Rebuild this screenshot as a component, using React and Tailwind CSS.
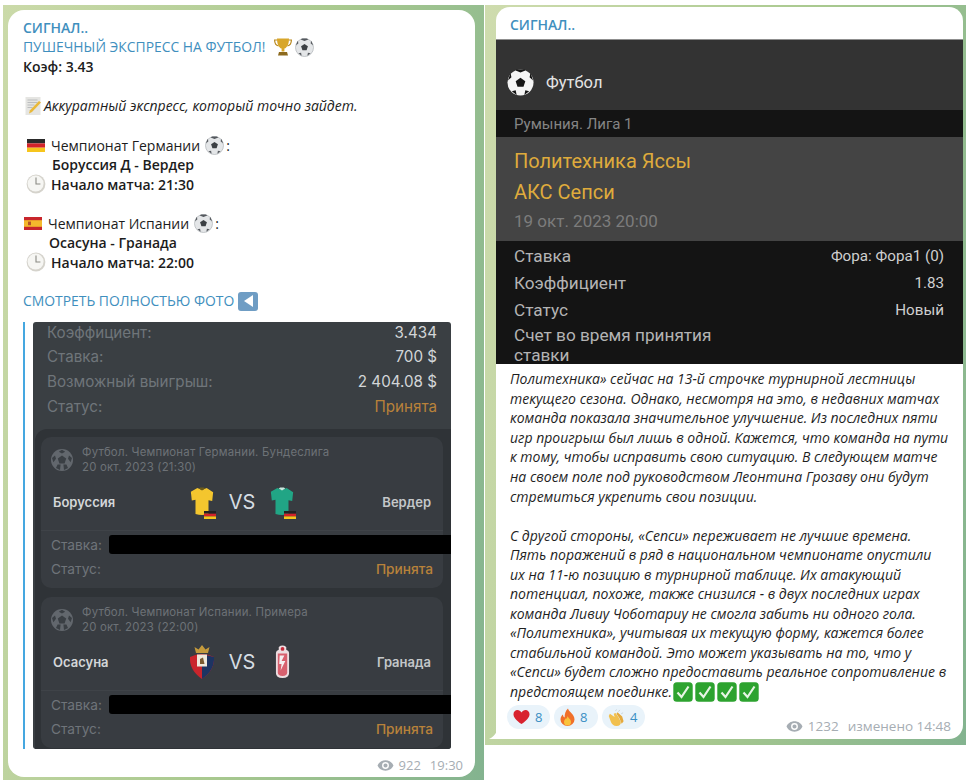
import React from "react";

const OPEN = "font-['Open_Sans',sans-serif]";

const Ball = ({ className = "w-[19px] h-[19px]" }) => (
  <svg viewBox="0 0 20 20" className={`shrink-0 ${className}`}>
    <circle cx="10" cy="10" r="9.5" fill="#e4e6e8" />
    <circle cx="10" cy="10" r="9.5" fill="none" stroke="#b4b8bc" strokeWidth="0.8" />
    <path d="M10 6.2l3.6 2.6-1.4 4.2H7.8L6.4 8.8z" fill="#3c4044" />
    <path d="M6 1.6L10 3.2l4-1.6-1.5-1H7.5zM1 8l2.6-2.4L2.8 3zM19 8l-2.6-2.4L17.2 3zM3.6 16l2.8-.6L7 18.8zM16.4 16l-2.8-.6L13 18.8z" fill="#55595e" />
  </svg>
);

const Clock = () => (
  <svg viewBox="0 0 20 20" className="w-[20px] h-[20px] shrink-0">
    <circle cx="10" cy="10" r="9.4" fill="#d5d3cc" />
    <circle cx="9.6" cy="9.6" r="8" fill="#f6f6f3" />
    <path d="M10 3.6V10h4.4" fill="none" stroke="#8a8a84" strokeWidth="1.1" />
  </svg>
);

const FlagDe = () => (
  <svg viewBox="0 0 18 13" className="w-[18px] h-[13px] shrink-0">
    <rect width="18" height="4.4" fill="#2a2a2a" />
    <rect y="4.4" width="18" height="4.3" fill="#d3232a" />
    <rect y="8.7" width="18" height="4.3" fill="#f6c51d" />
  </svg>
);

const FlagEs = () => (
  <svg viewBox="0 0 18 13" className="w-[18px] h-[13px] shrink-0">
    <rect width="18" height="13" fill="#c8262c" />
    <rect y="3.2" width="18" height="6.6" fill="#f4b92c" />
    <rect x="4" y="4.6" width="3" height="3.6" fill="#b5532a" />
  </svg>
);

const Trophy = () => (
  <svg viewBox="0 0 20 20" className="w-[20px] h-[20px] shrink-0">
    <path d="M4 3H1.6c0 3.6 1.4 5.4 4 6M16 3h2.4c0 3.6-1.4 5.4-4 6" fill="none" stroke="#b98a22" strokeWidth="1.2" />
    <path d="M4 1.4h12c0 5.4-1.6 9-4.6 10.2v3H8.600v-3C5.600 10.400 4 6.800 4 1.400z" fill="#d8a62a" />
    <path d="M6 15h8l1 3.600H5z" fill="#8c6a1e" />
  </svg>
);

const Memo = () => (
  <svg viewBox="0 0 18 20" className="w-[18px] h-[20px] shrink-0">
    <rect x="0.500" y="1" width="15" height="18" fill="#e5e5e2" />
    <path d="M2.500 4h10M2.500 6.500h10M2.500 9h7M2.500 11.500h5" stroke="#a9acb0" strokeWidth="0.7" />
    <path d="M16 6.500L7 16l-3 1.500 1-3.200 9-9.300z" fill="#e9b93a" />
  </svg>
);

const Eye = ({ className }) => (
  <svg viewBox="0 0 24 16" className={`shrink-0 ${className}`} fill="#a6adb3">
    <path fillRule="evenodd" d="M12 .5C6.600.5 2.200 3.600.4 8c1.800 4.400 6.200 7.500 11.600 7.500S21.800 12.400 23.600 8C21.800 3.600 17.400.5 12 .5zm0 12.500a5 5 0 110-10 5 5 0 010 10zm0-8a3 3 0 100 6 3 3 0 000-6z" />
  </svg>
);

const SportIcon = () => (
  <svg viewBox="0 0 22 22" className="w-[22px] h-[22px] shrink-0">
    <circle cx="11" cy="11" r="11" fill="#62676d" />
    <path d="M11 6.500l4.200 3-1.600 5H8.400l-1.600-5z" fill="#3a3f44" />
    <path d="M11 .8l3.200 2-3.200 1.800-3.200-1.800zM1 9l3-2.600 1 3.400-2.600 3.400zM21 9l-3-2.600-1 3.400 2.600 3.400zM5 19l1.600-3.400h3l-.6 5.400zM17 19l-1.600-3.400h-3l.6 5.400z" fill="#3a3f44" />
  </svg>
);

const Jersey = ({ color, shade }) => (
  <div className="relative w-[26px] h-[33px]">
    <svg viewBox="0 0 28 32" className="w-[26px] h-[32px]">
      <path d="M9 1l5 2 5-2 7 4.500-1 9.500-4-.8V29q-7 2-14 0V13.700l-4 .8-1-9.500z" fill={color} />
      <path d="M10.500 1.500L14 3.500l3.500-2-1.500-1h-4z" fill={shade} />
    </svg>
    <svg viewBox="0 0 12 8" className="absolute -right-[1px] bottom-0 w-[12px] h-[8px]">
      <rect width="12" height="2.700" fill="#222" />
      <rect y="2.700" width="12" height="2.700" fill="#d3232a" />
      <rect y="5.400" width="12" height="2.600" fill="#f6c51d" />
    </svg>
  </div>
);

const Osasuna = () => (
  <svg viewBox="0 0 26 36" className="w-[26px] h-[36px]">
    <path d="M7 9L5.500 3l4 2.500L13 1l3.500 4.500 4-2.500L19 9z" fill="#c49a3c" />
    <path d="M1 13q12-6 24 0 1 13-12 22Q0 26 1 13z" fill="#c9252c" />
    <path d="M13 11q6 0 12 2 1 13-12 22z" fill="#1d3462" />
    <rect x="8" y="10.500" width="10" height="12" fill="#efe9dc" />
    <path d="M11 20v-5l3-1.500 1.500 6.500z" fill="#7a5a30" />
  </svg>
);

const Granada = () => (
  <svg viewBox="0 0 16 36" className="w-[15px] h-[36px]">
    <path d="M4 2q4-3 8 0v3q3 1 3 3v22q0 5-7 5t-7-5V8q0-2 3-3z" fill="#ecdde0" />
    <path d="M3 9h10v20q0 4-5 4t-5-4z" fill="#d8606e" />
    <path d="M5 11h5l-3 6h4L6 27l1-7H4.500z" fill="#f5eef0" />
    <circle cx="8" cy="4" r="2" fill="#c42a3a" />
  </svg>
);

const Heart = () => (
  <svg viewBox="0 0 18 16" className="w-[17px] h-[16px] shrink-0">
    <path d="M9 15.500C3 11 .5 8 .5 5 .5 2.500 2.500.7 4.700.7 6.500.7 8 1.700 9 3.300 10 1.700 11.500.7 13.300.7 15.500.7 17.500 2.500 17.500 5c0 3-2.500 6-8.500 10.500z" fill="#d8232f" />
  </svg>
);

const Fire = () => (
  <svg viewBox="0 0 15 18" className="w-[15px] h-[18px] shrink-0">
    <path d="M8 .5c.8 3.500 6.500 5.500 6.500 11A7 6.500 0 11.500 11.500c0-2.500 1.300-4 2.500-5 0 1.500.6 2.500 1.600 3C4.600 6 5.500 2.500 8 .5z" fill="#f0702a" />
    <path d="M7.500 8c.5 2 3.500 3 3.500 6a3.500 3.500 0 11-7 0c0-2 1.500-3 1.800-3.800.5.800 1 1 1.700-2.200z" fill="#f9c33c" />
  </svg>
);

const Clap = () => (
  <svg viewBox="0 0 18 18" className="w-[17px] h-[17px] shrink-0">
    <path d="M2 5l5 3.500L6 5l2-.8 3 4.300 2.500 5c.5 2.500-1 4.500-4.500 4.500-3 0-5-2-6-4.500L.8 7.500z" fill="#f1c04f" />
    <path d="M8 2l1-1.500M11 3l1.500-2M14 5l2-1" stroke="#c9d3da" strokeWidth="1" />
    <path d="M10 3.500l5 4.500 1.500 5-2 2.500-2.500-6-3-4.500z" fill="#e5a93c" />
  </svg>
);

const Check = () => (
  <svg viewBox="0 0 20 20" className="w-[20px] h-[20px] shrink-0">
    <rect x="0.300" y="0.300" width="19.400" height="19.400" rx="3.500" fill="#2da32f" />
    <path d="M4.500 10.500l4 4.500L15.500 4.500" fill="none" stroke="#e7f5e4" strokeWidth="2.200" />
  </svg>
);

const Line = ({ className = "", children }) => (
  <div className={`flex items-center h-[19.55px] whitespace-nowrap ${className}`}>{children}</div>
);

const BetCard = ({ league, date, home, away, homeIcon, awayIcon }) => (
  <div className="bg-[#383c41] rounded-[10px] h-[151px] font-['Inter',sans-serif]">
    <div className="flex items-center gap-[9px] pl-[10px] h-[46px]">
      <SportIcon />
      <div className="text-[11.400px] leading-[15px] text-[#6d7277] tracking-[0.2px] whitespace-nowrap">
        <div>{league}</div>
        <div>{date}</div>
      </div>
    </div>
    <div className="grid grid-cols-[1fr_auto_1fr] items-center h-[38px] px-[12px]">
      <div className="text-[13px] font-semibold text-[#d4d7d9]">{home}</div>
      <div className="flex items-center justify-center gap-[13px]">
        <div className="w-[28px] flex justify-center">{homeIcon}</div>
        <span className="text-[20px] text-[#d6dde3]">VS</span>
        <div className="w-[28px] flex justify-center">{awayIcon}</div>
      </div>
      <div className="text-[13px] font-semibold text-[#c4c7c9] text-right">{away}</div>
    </div>
    <div className="border-t border-[#3f4348] mt-[9px] pt-[2px] px-[10px] text-[13.700px] text-[#6f747a]">
      <div className="flex items-center h-[23px] gap-[7px]">
        <span>Ставка:</span>
        <div className="flex-1 h-[19px] bg-black rounded-l-[3px] -mr-[18px]" />
      </div>
      <div className="flex items-center justify-between h-[26px]">
        <span>Статус:</span>
        <span className="text-[#b8823a] font-medium">Принята</span>
      </div>
    </div>
  </div>
);

const TopRow = ({ label, value, valueClass = "text-[#d3d6d8]" }) => (
  <div className="flex items-center justify-between h-[24.700px] text-[15.200px] font-['Inter',sans-serif]">
    <span className="text-[#6f757a]">{label}</span>
    <span className={valueClass}>{value}</span>
  </div>
);

const InfoRow = ({ label, value }) => (
  <div className="flex items-center justify-between h-[27px]">
    <span className="text-[17.200px] text-[#b4b4b4]">{label}</span>
    <span className="text-[15.200px] text-[#cfcfcf]">{value}</span>
  </div>
);

const ARTICLE = [
  "Политехника» сейчас на 13-й строчке турнирной лестницы",
  "текущего сезона. Однако, несмотря на это, в недавних матчах",
  "команда показала значительное улучшение. Из последних пяти",
  "игр проигрыш был лишь в одной. Кажется, что команда на пути",
  "к тому, чтобы исправить свою ситуацию. В следующем матче",
  "на своем поле под руководством Леонтина Грозаву они будут",
  "стремиться укрепить свои позиции.",
  "",
  "С другой стороны, «Сепси» переживает не лучшие времена.",
  "Пять поражений в ряд в национальном чемпионате опустили",
  "их на 11-ю позицию в турнирной таблице. Их атакующий",
  "потенциал, похоже, также снизился - в двух последних играх",
  "команда Ливиу Чоботариу не смогла забить ни одного гола.",
  "«Политехника», учитывая их текущую форму, кажется более",
  "стабильной командой. Это может указывать на то, что у",
  "«Сепси» будет сложно предоставить реальное сопротивление в",
];

const Reaction = ({ icon, count, className }) => (
  <div className={`flex items-center gap-[5px] h-[24px] rounded-full bg-[#e9f3fa] pl-[6px] ${className}`}>
    {icon}
    <span className="text-[13px] text-[#3a8fc4]">{count}</span>
  </div>
);

export default function App() {
  return (
    <div className={`flex gap-[1px] pl-[3px] pt-[5px] w-[978px] h-[782px] bg-white overflow-hidden ${OPEN}`}>
      {/* left post */}
      <div className="w-[481px] h-[775px] pl-[5px] pt-[5px] bg-[linear-gradient(100deg,#cbdaa9_0%,#a9c98f_55%,#83b38f_100%)]">
        <div className="w-[467px] h-[767px] bg-white rounded-[16px] pl-[15px] pt-[8px] text-[14px] text-[#1c1c1c]">
          <Line className="font-semibold text-[#3f8fbe]">СИГНАЛ..</Line>
          <Line className="text-[#3f8fbe] text-[13.900px]">
            ПУШЕЧНЫЙ ЭКСПРЕСС НА ФУТБОЛ!
            <span className="ml-[7px] flex gap-[2px] items-center"><Trophy /><Ball /></span>
          </Line>
          <Line className="font-semibold">Коэф: 3.43</Line>
          <Line />
          <Line className="italic pl-[2px]"><Memo /><span className="ml-[1px]">Аккуратный экспресс, который точно зайдет.</span></Line>
          <Line />
          <Line className="pl-[4px]"><FlagDe /><span className="ml-[6px]">Чемпионат Германии</span><span className="ml-[5px] mr-[2px]"><Ball /></span>:</Line>
          <Line className="pl-[29px] font-semibold">Боруссия Д - Вердер</Line>
          <Line className="pl-[3px] font-semibold"><Clock /><span className="ml-[5px]">Начало матча: 21:30</span></Line>
          <Line />
          <Line className="pl-[1px]"><FlagEs /><span className="ml-[6px]">Чемпионат Испании</span><span className="ml-[5px] mr-[2px]"><Ball /></span>:</Line>
          <Line className="pl-[26px] font-semibold">Осасуна - Гранада</Line>
          <Line className="pl-[3px] font-semibold"><Clock /><span className="ml-[5px]">Начало матча: 22:00</span></Line>
          <Line />
          <Line className="text-[#3f8fbe] text-[13.900px]">
            СМОТРЕТЬ ПОЛНОСТЬЮ ФОТО
            <span className="ml-[4px] w-[20px] h-[19px] rounded-[3px] bg-[#6f9dc4] flex items-center justify-center">
              <span className="w-0 h-0 border-y-[6px] border-y-transparent border-r-[9px] border-r-white" />
            </span>
          </Line>

          <div className="flex mt-[10.500px]">
            <div className="w-[2px] bg-[#45a7e0]" />
            <div className="ml-[8px] w-[418px] h-[427px] bg-[#3a3f43] rounded-[3px] overflow-hidden">
              <div className="px-[14px] -mt-[1px]">
                <TopRow label="Коэффициент:" value="3.434" />
                <TopRow label="Ставка:" value="700 $" />
                <TopRow label="Возможный выигрыш:" value="2 404.08 $" />
                <TopRow label="Статус:" value="Принята" valueClass="text-[#b8823a]" />
              </div>
              <div className="mt-[10px] ml-[2px] h-[320px] bg-[#2f3337] rounded-tl-[12px] pl-[6px] pr-[8px] pt-[8px] flex flex-col gap-[9px]">
                <BetCard
                  league="Футбол. Чемпионат Германии. Бундеслига"
                  date="20 окт. 2023 (21:30)"
                  home="Боруссия"
                  away="Вердер"
                  homeIcon={<Jersey color="#f4c62e" shade="#6a5a1a" />}
                  awayIcon={<Jersey color="#21a585" shade="#c9e8de" />}
                />
                <BetCard
                  league="Футбол. Чемпионат Испании. Примера"
                  date="20 окт. 2023 (22:00)"
                  home="Осасуна"
                  away="Гранада"
                  homeIcon={<Osasuna />}
                  awayIcon={<Granada />}
                />
              </div>
            </div>
          </div>

          <div className="flex items-center justify-end gap-[5px] pr-[12px] mt-[7px] text-[13px] text-[#a6adb3]">
            <Eye className="w-[17px] h-[11px]" />
            <span>922</span>
            <span className="ml-[4px]">19:30</span>
          </div>
        </div>
      </div>

      {/* right post */}
      <div className="w-[481px] h-[740px] pl-[11px] pt-[2px] bg-[linear-gradient(100deg,#cfdcae_0%,#a9c98f_55%,#83b38f_100%)]">
        <div className="relative w-[467px] h-[732px] bg-white rounded-t-[14px] rounded-br-[14px]">
          <svg viewBox="0 0 8 8" className="absolute -left-[7px] bottom-0 w-[8px] h-[8px]">
            <path d="M8 0v8H0q5-2 8-8z" fill="#fff" />
          </svg>
          <div className="h-[32px] flex items-center pl-[14px] pt-[3px] text-[14px] font-semibold text-[#3f8fbe]">СИГНАЛ..</div>
          <div className="font-['Roboto',sans-serif]">
            <div className="h-[71px] bg-[#333333] border-t border-[#8f8f8f] flex items-center pl-[11px] pt-[15px] gap-[12px]">
              <svg viewBox="0 0 28 28" className="w-[27px] h-[27px] shrink-0">
                <circle cx="14" cy="14" r="13.500" fill="#f4f4f4" />
                <path d="M14 9l5 3.600-1.900 5.900h-6.200L9 12.600z" fill="#151515" />
                <path d="M9 1.500l5 2 5-2-1-1H10zM1 12l3.600-3.500-1-4.500zM27 12l-3.600-3.500 1-4.500zM5 23l4-1 1 5zM23 23l-4-1-1 5z" fill="#151515" />
              </svg>
              <span className="text-[16.500px] text-[#e4e4e4] pt-[1px]">Футбол</span>
            </div>
            <div className="h-[27px] bg-[#141414] flex items-center pl-[18px] pt-[1px] text-[15px] text-[#858585]">Румыния. Лига 1</div>
            <div className="h-[104px] bg-[#444444] pl-[18px] pt-[8px]">
              <div className="h-[31px] flex items-center text-[20px] text-[#dfab3c]">Политехника Яссы</div>
              <div className="h-[31px] flex items-center text-[20px] text-[#dfab3c]">АКС Сепси</div>
              <div className="h-[29px] flex items-center text-[17px] text-[#7c7c7c]">19 окт. 2023 20:00</div>
            </div>
            <div className="h-[123px] bg-[#141414] pl-[18px] pr-[19px] pt-[2px] overflow-hidden">
              <InfoRow label="Ставка" value="Фора: Фора1 (0)" />
              <InfoRow label="Коэффициент" value="1.83" />
              <InfoRow label="Статус" value="Новый" />
              <div className="text-[17.200px] leading-[20px] text-[#b4b4b4] mt-[1px]">Счет во время принятия<br />ставки</div>
            </div>
          </div>
          <div className="pl-[14px] pt-[5px] italic text-[14px] text-[#1f1f1f]">
            {ARTICLE.map((line, i) => (
              <Line key={i}>{line}</Line>
            ))}
            <Line>
              предстоящем поединке.
              <span className="flex gap-[2px] ml-[1px]"><Check /><Check /><Check /><Check /></span>
            </Line>
          </div>
          <div className="flex items-start justify-between pl-[11px] pr-[12px] mt-[4px]">
            <div className="flex gap-[4px]">
              <Reaction icon={<Heart />} count="8" className="w-[43px]" />
              <Reaction icon={<Fire />} count="8" className="w-[44px]" />
              <Reaction icon={<Clap />} count="4" className="w-[43px]" />
            </div>
            <div className="flex items-center gap-[5px] mt-[11px] text-[13.500px] text-[#a6adb3]">
              <Eye className="w-[17px] h-[11px]" />
              <span>1232</span>
              <span className="ml-[4px]">изменено 14:48</span>
            </div>
          </div>
        </div>
      </div>
    </div>
  );
}
